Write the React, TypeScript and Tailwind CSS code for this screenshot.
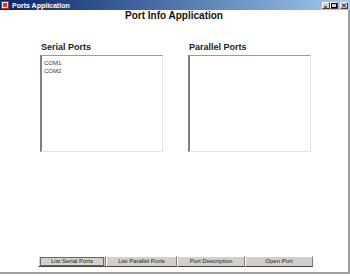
const FONT = "font-['Liberation_Sans',Tahoma,sans-serif]";

function CaptionButton({ kind }: { kind: 'min' | 'max' | 'close' }) {
  return (
    <div className="w-[8px] h-[7px] bg-[#d4d0c8] border-t border-l border-white border-r border-b border-r-[#404040] border-b-[#404040] flex items-center justify-center">
      <svg width="6" height="5" viewBox="0 0 6 5">
        {kind === 'min' && <rect x="1" y="3.5" width="3" height="1" fill="#000" />}
        {kind === 'max' && <rect x="0.5" y="0.5" width="5" height="4" fill="none" stroke="#000" strokeWidth="1" />}
        {kind === 'close' && <path d="M1 0.5 L5 4.5 M5 0.5 L1 4.5" stroke="#000" strokeWidth="1" />}
      </svg>
    </div>
  );
}

function PortList({ title, items }: { title: string; items: string[] }) {
  return (
    <div className="flex flex-col">
      <div className="text-[9px] font-bold text-[#222] leading-[10px] pl-px h-[13px]">{title}</div>
      <div className="w-[123px] h-[97px] bg-white border-t border-l-2 border-r border-b border-t-[#9a9a9a] border-l-[#808080] border-r-[#e4e2dc] border-b-[#e4e2dc] pt-[3px] pl-[2px]">
        {items.map((it) => (
          <div key={it} className="text-[6px] leading-[8px] text-[#333]">{it}</div>
        ))}
      </div>
    </div>
  );
}

function Btn({ label, w, focused }: { label: string; w: string; focused?: boolean }) {
  return (
    <div className={`${w} h-[11px] bg-[#d4d0c8] border-t border-l border-white border-r border-b border-r-[#808080] border-b-[#404040] flex items-center justify-center`}>
      <div className={`w-full h-full flex items-center justify-center text-[6px] text-[#222] ${focused ? 'border border-[#6a6a6a] m-px' : ''}`}>
        {label}
      </div>
    </div>
  );
}

export default function App() {
  return (
    <div className={`w-[350px] h-[276px] bg-white flex flex-col overflow-hidden ${FONT}`}>
      {/* title bar */}
      <div className="h-[10px] flex items-center bg-gradient-to-r from-[#0a246a] to-[#a6caf0] pl-[1px] pr-[2px]">
        <div className="w-[8px] h-[8px] bg-[#e6e6e6] border border-[#c03030] flex items-center justify-center">
          <div className="w-[4px] h-[4px] bg-[#d04040]" />
        </div>
        <span className="ml-[3px] text-[7px] font-bold text-white leading-none">Ports Application</span>
        <div className="ml-auto flex">
          <CaptionButton kind="min" />
          <CaptionButton kind="max" />
          <div className="w-[2px]" />
          <CaptionButton kind="close" />
        </div>
      </div>

      <div className="flex-1 flex flex-col border-r-2 border-b-2 border-[#a0a0a0] mb-[2px]">
        <div className="text-center text-[10px] font-bold text-[#111] leading-[10px] mt-[1px]">Port Info Application</div>

        <div className="flex gap-[25px] pl-[40px] mt-[21px]">
          <PortList title="Serial Ports" items={['COM1', 'COM2']} />
          <PortList title="Parallel Ports" items={[]} />
        </div>

        <div className="flex-1" />

        <div className="flex pl-[38px] mb-[5px]">
          <Btn label="List Serial Ports" w="w-[68px]" focused />
          <Btn label="List Parallel Ports" w="w-[71px]" />
          <Btn label="Port Description" w="w-[68px]" />
          <Btn label="Open Port" w="w-[68px]" />
        </div>
      </div>
    </div>
  );
}
